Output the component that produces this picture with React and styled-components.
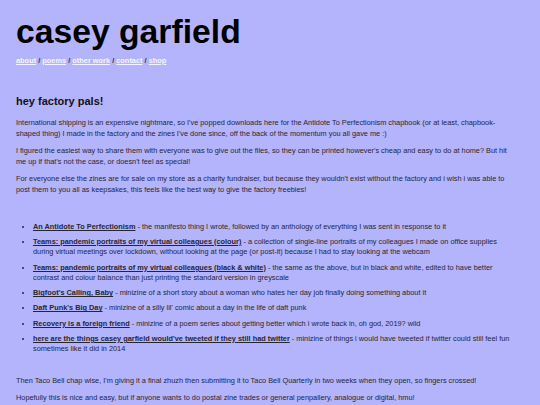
import React from "react";
import styled, { createGlobalStyle } from "styled-components";

const Global = createGlobalStyle`
  html, body { margin: 0; padding: 0; background: #b4b4fd; }
  body { font-family: "Liberation Sans", Arial, sans-serif; color: #262630; }
`;

const Page = styled.main`
  padding: 12px 25px 0 16px;
  background: #b4b4fd;
  min-height: 405px;
  box-sizing: border-box;
`;

const Title = styled.h1`
  margin: 0;
  font-size: 33.7px;
  font-weight: 700;
  color: #000;
  line-height: normal;
`;

const Nav = styled.nav`
  margin-top: 4.7px;
  font-size: 7.4px;
  line-height: 10.5px;
  font-weight: 700;
  color: #333;
`;

const NavLink = styled.a`
  color: #f4f4ff;
  text-decoration: underline;
`;

const Heading = styled.h2`
  margin: 29px 0 11px;
  font-size: 11px;
  font-weight: 700;
  line-height: normal;
  color: #111;
`;

const Para = styled.p`
  margin: 0 0 7px;
  font-size: 7.35px;
  line-height: 10.5px;
`;

const List = styled.ul`
  margin: 26.5px 0 21px;
  padding-left: 17px;
  font-size: 7.35px;
  line-height: 10.5px;
`;

const Item = styled.li`
  margin-bottom: 4.7px;
`;

const Link = styled.a`
  color: #262630;
  font-weight: 700;
  text-decoration: underline;
`;

const navItems = ["about", "poems", "other work", "contact", "shop"];

const items = [
  ["An Antidote To Perfectionism", "the manifesto thing I wrote, followed by an anthology of everything I was sent in response to it"],
  ["Teams: pandemic portraits of my virtual colleagues (colour)", "a collection of single-line portraits of my colleagues I made on office supplies during virtual meetings over lockdown, without looking at the page (or post-it) because I had to stay looking at the webcam"],
  ["Teams: pandemic portraits of my virtual colleagues (black & white)", "the same as the above, but in black and white, edited to have better contrast and colour balance than just printing the standard version in greyscale"],
  ["Bigfoot's Calling, Baby", "minizine of a short story about a woman who hates her day job finally doing something about it"],
  ["Daft Punk's Big Day", "minizine of a silly lil' comic about a day in the life of daft punk"],
  ["Recovery is a foreign friend", "minizine of a poem series about getting better which i wrote back in, oh god, 2019? wild"],
  ["here are the things casey garfield would've tweeted if they still had twitter", "minizine of things i would have tweeted if twitter could still feel fun sometimes like it did in 2014"],
];

export default function App() {
  return (
    <>
      <Global />
      <Page>
        <Title>casey garfield</Title>
        <Nav>
          {navItems.map((n, i) => (
            <React.Fragment key={n}>
              {i > 0 && " / "}
              <NavLink href="#">{n}</NavLink>
            </React.Fragment>
          ))}
        </Nav>
        <Heading>hey factory pals!</Heading>
        <Para>
          International shipping is an expensive nightmare, so I've popped downloads here for the Antidote To Perfectionism chapbook (or at least, chapbook-shaped thing) I made in the factory and the zines I've done since, off the back of the momentum you all gave me :)
        </Para>
        <Para>
          I figured the easiest way to share them with everyone was to give out the files, so they can be printed however's cheap and easy to do at home? But hit me up if that's not the case, or doesn't feel as special!
        </Para>
        <Para>
          For everyone else the zines are for sale on my store as a charity fundraiser, but because they wouldn't exist without the factory and i wish i was able to post them to you all as keepsakes, this feels like the best way to give the factory freebies!
        </Para>
        <List>
          {items.map(([t, d]) => (
            <Item key={t}>
              <Link href="#">{t}</Link> - {d}
            </Item>
          ))}
        </List>
        <Para>
          Then Taco Bell chap wise, I'm giving it a final zhuzh then submitting it to Taco Bell Quarterly in two weeks when they open, so fingers crossed!
        </Para>
        <Para>
          Hopefully this is nice and easy, but if anyone wants to do postal zine trades or general penpallery, analogue or digital, hmu!
        </Para>
      </Page>
    </>
  );
}
